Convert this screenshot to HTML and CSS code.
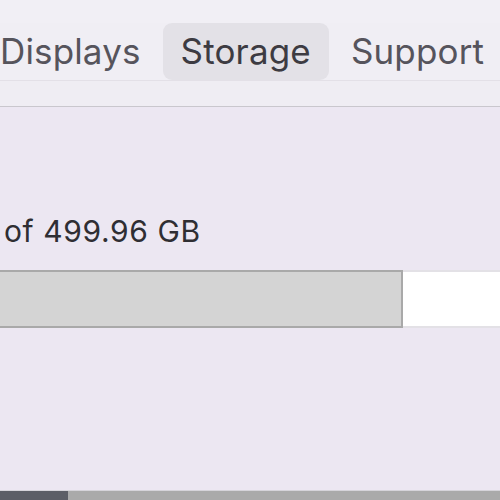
FILE: index.html
```html
<!DOCTYPE html>
<html>
<head>
<meta charset="utf-8">
<link rel="stylesheet" href="styles.css">
</head>
<body>
<div class="window">
  <div class="topstrip"></div>
  <div class="tabbar">
    <div class="tab">Displays</div>
    <div class="tab active">Storage</div>
    <div class="tab">Support</div>
  </div>
  <div class="subbar"></div>
  <div class="content">
    <div class="usage">of 499.96 GB</div>
    <div class="bar">
      <div class="used" style="width:403px"></div>
      <div class="free"></div>
    </div>
  </div>
  <div class="dock">
    <div class="dock-dark"></div>
    <div class="dock-light"></div>
  </div>
</div>
</body>
</html>
```
FILE: styles.css
```css
html, body {
  margin: 0;
  padding: 0;
}
body {
  width: 500px;
  height: 500px;
  overflow: hidden;
  font-family: Inter, "Noto Sans", sans-serif;
  background: #ece8f2;
}
.window {
  display: flex;
  flex-direction: column;
  width: 500px;
  height: 500px;
}
.topstrip {
  height: 24px;
  background: #f1eff5;
  border-bottom: 1px solid #e0dde4;
  box-sizing: border-box;
}
.tabbar {
  height: 58px;
  background: #f0eef4;
  border-bottom: 1px solid #e3e0e7;
  box-sizing: border-box;
  display: flex;
  align-items: stretch;
  margin-top: -1px;
  white-space: nowrap;
}
.tab {
  font-size: 35px;
  letter-spacing: 0.15px;
  color: #56545c;
  display: flex;
  align-items: center;
  padding: 0 18px 2px;
  flex-shrink: 0;
}
.tab:first-child {
  padding-left: 0;
  padding-right: 22px;
}
.tab:last-child {
  padding-left: 22px;
}
.tab.active {
  background: #e3e1e7;
  border-radius: 9px;
  color: #3d3b42;
}
.subbar {
  height: 26px;
  background: #efedf3;
  border-bottom: 1px solid #c9c7cd;
  box-sizing: border-box;
}
.content {
  flex: 1;
  background: #ece7f2;
  padding-top: 106px;
}
.usage {
  font-size: 30px;
  letter-spacing: 0.6px;
  color: #2f2e33;
  padding-left: 4px;
  line-height: 36px;
}
.bar {
  margin-top: 21px;
  height: 58px;
  display: flex;
}
.used {
  background: #d4d4d4;
  border: 2px solid #a9a9a9;
  border-left: none;
  box-sizing: border-box;
}
.free {
  flex: 1;
  background: #ffffff;
  border-top: 2px solid #e3e1e6;
  border-bottom: 2px solid #e3e1e6;
}
.dock {
  height: 9px;
  display: flex;
  border-top: 1px solid #d6d4da;
}
.dock-dark {
  width: 68px;
  background: #5c5e66;
}
.dock-light {
  flex: 1;
  background: #aaaaaa;
}
```
